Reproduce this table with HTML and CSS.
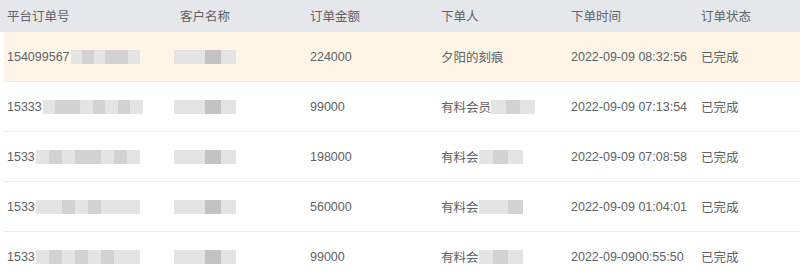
FILE: index.html
```html
<!DOCTYPE html>
<html>
<head>
<meta charset="utf-8">
<link rel="stylesheet" href="styles.css">
</head>
<body>
<div class="table">
  <div class="row head">
    <div class="c">平台订单号</div>
    <div class="c">客户名称</div>
    <div class="c">订单金额</div>
    <div class="c">下单人</div>
    <div class="c">下单时间</div>
    <div class="c">订单状态</div>
  </div>
  <div class="row body hl">
    <div class="c">154099567<span class="mask m-id short"><i></i><i class="d"></i><i></i><i class="d"></i><i class="d"></i><i></i></span></div>
    <div class="c"><span class="mask m-name"><i></i><i></i><i class="dd"></i><i></i></span></div>
    <div class="c">224000</div>
    <div class="c">夕阳的刻痕</div>
    <div class="c">2022-09-09 08:32:56</div>
    <div class="c">已完成</div>
  </div>
  <div class="row body">
    <div class="c">15333<span class="mask m-id mid"><i></i><i class="d"></i><i class="d"></i><i></i><i class="d"></i><i></i><i class="d"></i><i></i></span></div>
    <div class="c"><span class="mask m-name"><i></i><i></i><i class="dd"></i><i></i></span></div>
    <div class="c">99000</div>
    <div class="c">有料会员<span class="mask m-user"><i></i><i class="d"></i><i></i></span></div>
    <div class="c">2022-09-09 07:13:54</div>
    <div class="c">已完成</div>
  </div>
  <div class="row body">
    <div class="c">1533<span class="mask m-id"><i></i><i class="d"></i><i></i><i class="d"></i><i class="d"></i><i></i><i class="d"></i><i></i></span></div>
    <div class="c"><span class="mask m-name"><i></i><i></i><i class="dd"></i><i></i></span></div>
    <div class="c">198000</div>
    <div class="c">有料会<span class="mask m-user"><i></i><i class="d"></i><i></i></span></div>
    <div class="c">2022-09-09 07:08:58</div>
    <div class="c">已完成</div>
  </div>
  <div class="row body">
    <div class="c">1533<span class="mask m-id"><i></i><i></i><i class="d"></i><i></i><i class="d"></i><i></i><i></i><i></i></span></div>
    <div class="c"><span class="mask m-name"><i></i><i></i><i class="dd"></i><i></i></span></div>
    <div class="c">560000</div>
    <div class="c">有料会<span class="mask m-user"><i></i><i></i><i class="d"></i></span></div>
    <div class="c">2022-09-09 01:04:01</div>
    <div class="c">已完成</div>
  </div>
  <div class="row body">
    <div class="c">1533<span class="mask m-id"><i></i><i class="d"></i><i></i><i class="d"></i><i></i><i class="d"></i><i></i><i></i></span></div>
    <div class="c"><span class="mask m-name"><i></i><i></i><i class="dd"></i><i></i></span></div>
    <div class="c">99000</div>
    <div class="c">有料会<span class="mask m-user"><i></i><i class="d"></i><i></i></span></div>
    <div class="c">2022-09-0900:55:50</div>
    <div class="c">已完成</div>
  </div>
</div>
</body>
</html>
```
FILE: styles.css
```css
html, body {
  margin: 0;
  padding: 0;
  background: #ffffff;
}
body {
  font-family: "Liberation Sans", "Noto Sans CJK SC", sans-serif;
  font-size: 12.5px;
  color: #606266;
  width: 800px;
  height: 280px;
  overflow: hidden;
}
.table {
  display: flex;
  flex-direction: column;
}
.row {
  display: grid;
  grid-template-columns: 173px 130px 131px 130px 130px 1fr;
  align-items: center;
}
.head {
  height: 32px;
  background: #e6e7ea;
  padding-left: 4px;
  color: #606266;
  padding-bottom: 1px;
  box-sizing: border-box;
}
.body {
  height: 49px;
  margin-left: 4px;
  border-bottom: 1px solid #ebeef5;
}
.hl {
  background: #fef5e6;
}
.c {
  padding-left: 3px;
  white-space: nowrap;
  display: flex;
  align-items: center;
}
.mask {
  display: inline-flex;
  height: 14px;
  filter: blur(0.6px);
}
.mask i {
  flex: 1;
  background: #e4e4e4;
}
.mask i.d {
  background: #d2d2d2;
}
.mask i.dd {
  background: #c2c2c2;
}
.m-id { width: 104px; margin-left: 1px; }
.m-id.mid { width: 100px; }
.m-id.short { width: 69px; }
.m-name { width: 62px; margin-left: -6px; }
.m-user { width: 44px; }
```
